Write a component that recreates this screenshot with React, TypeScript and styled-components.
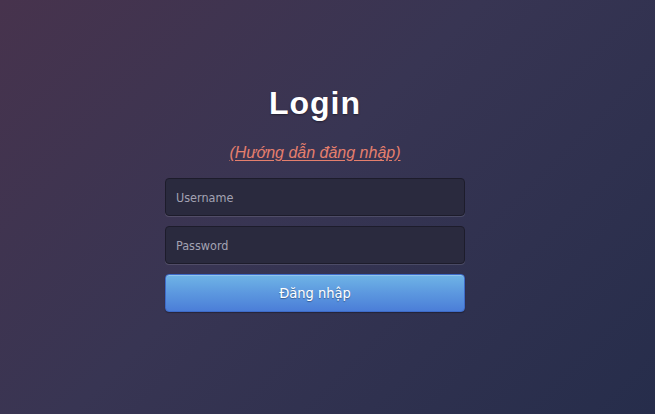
import React from "react";
import styled, { createGlobalStyle } from "styled-components";

const Global = createGlobalStyle`
  html, body { margin: 0; padding: 0; height: 100%; }
  body {
    background: linear-gradient(135deg, #47334d 0%, #383553 45%, #262d4b 100%);
    font-family: "Liberation Sans", Arial, sans-serif;
  }
  #root { min-height: 414px; }
`;

const Page = styled.div`
  box-sizing: border-box;
  width: 655px;
  height: 414px;
  padding-right: 25px;
  display: flex;
  justify-content: center;
`;

const Form = styled.form`
  width: 300px;
  padding-top: 84px;
  display: flex;
  flex-direction: column;
  align-items: stretch;
`;

const Title = styled.h1`
  margin: 0;
  text-align: center;
  color: #ffffff;
  font-family: "Liberation Sans", Arial, sans-serif;
  font-weight: bold;
  font-size: 32px;
  line-height: 38px;
  letter-spacing: 1px;
  text-shadow: 0 1px 2px rgba(0, 0, 0, 0.4);
`;

const Guide = styled.a`
  align-self: center;
  margin-top: 21px;
  margin-bottom: 15px;
  color: #e57f6d;
  font-style: italic;
  font-size: 16px;
  line-height: 20px;
  text-decoration: underline;
  text-underline-offset: 2px;
  cursor: pointer;
`;

const Field = styled.input`
  box-sizing: border-box;
  width: 300px;
  height: 38px;
  margin-bottom: 10px;
  padding: 0 10px;
  border: 1px solid #1d1c2b;
  border-radius: 4px;
  background: #2a2a3e;
  box-shadow: 0 1px 0 rgba(255, 255, 255, 0.12);
  color: #ccc;
  font-family: "DejaVu Sans Condensed", "DejaVu Sans", sans-serif;
  font-stretch: condensed;
  font-size: 12.5px;
  outline: none;
  &::placeholder { color: #a3a2b3; }
`;

const Submit = styled.button`
  box-sizing: border-box;
  width: 300px;
  height: 38px;
  border: 1px solid #3e6bc8;
  border-radius: 4px;
  background: linear-gradient(to bottom, #6fb4e6 0%, #5c98df 50%, #4b7ed8 100%);
  box-shadow: inset 0 1px 0 rgba(255, 255, 255, 0.25), 0 1px 1px rgba(0, 0, 0, 0.3);
  color: #ffffff;
  font-family: "DejaVu Sans Condensed", "DejaVu Sans", sans-serif;
  font-stretch: condensed;
  font-size: 14.5px;
  text-shadow: 0 1px 1px rgba(0, 0, 0, 0.35);
  cursor: pointer;
`;

export default function App() {
  return (
    <>
      <Global />
      <Page>
        <Form onSubmit={(e) => e.preventDefault()}>
          <Title>Login</Title>
          <Guide>(Hướng dẫn đăng nhập)</Guide>
          <Field type="text" placeholder="Username" />
          <Field type="password" placeholder="Password" />
          <Submit type="submit">Đăng nhập</Submit>
        </Form>
      </Page>
    </>
  );
}
